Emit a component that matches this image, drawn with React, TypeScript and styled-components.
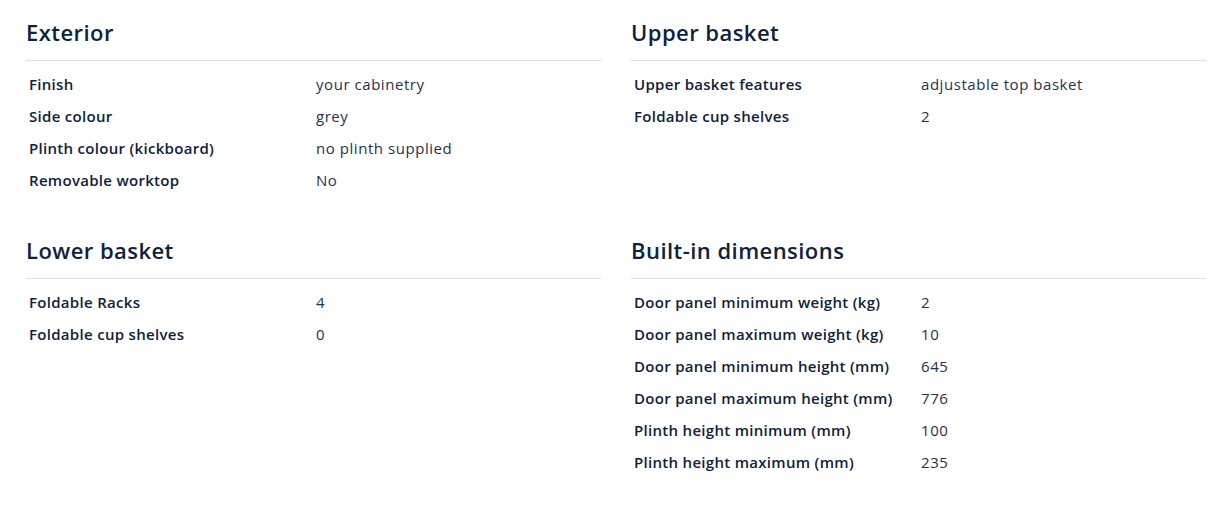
import { Fragment } from 'react';
import styled, { createGlobalStyle } from 'styled-components';

const GlobalStyle = createGlobalStyle`
  html, body {
    margin: 0;
    padding: 0;
    background: #ffffff;
  }
  body {
    font-family: "Open Sans", Lato, sans-serif;
    color: #0d2240;
  }
`;

const Page = styled.div`
  display: grid;
  grid-template-columns: 1fr 1fr;
  column-gap: 30px;
  row-gap: 22px;
  padding: 0 18px 0 26px;
  width: 1224px;
  box-sizing: border-box;
`;

const Section = styled.section`
  padding-top: 12px;
`;

const Heading = styled.h2`
  margin: 0;
  padding-bottom: 8px;
  border-bottom: 1px solid #dcdfe3;
  font-size: 22px;
  line-height: 40px;
  font-weight: 600;
  letter-spacing: 0.45px;
  color: #0d2240;
`;

const SpecList = styled.dl`
  margin: 7px 0 0;
  display: grid;
  grid-template-columns: 290px 1fr;
`;

const Label = styled.dt`
  padding-left: 3px;
  font-size: 15px;
  line-height: 32px;
  font-weight: 600;
  letter-spacing: 0.3px;
  color: #0d2240;
`;

const Value = styled.dd`
  margin: 0;
  font-size: 15px;
  line-height: 32px;
  font-weight: 400;
  letter-spacing: 0.55px;
  color: #1f3250;
`;

type Spec = [string, string];

const sections: { title: string; specs: Spec[] }[] = [
  {
    title: 'Exterior',
    specs: [
      ['Finish', 'your cabinetry'],
      ['Side colour', 'grey'],
      ['Plinth colour (kickboard)', 'no plinth supplied'],
      ['Removable worktop', 'No'],
    ],
  },
  {
    title: 'Upper basket',
    specs: [
      ['Upper basket features', 'adjustable top basket'],
      ['Foldable cup shelves', '2'],
    ],
  },
  {
    title: 'Lower basket',
    specs: [
      ['Foldable Racks', '4'],
      ['Foldable cup shelves', '0'],
    ],
  },
  {
    title: 'Built-in dimensions',
    specs: [
      ['Door panel minimum weight (kg)', '2'],
      ['Door panel maximum weight (kg)', '10'],
      ['Door panel minimum height (mm)', '645'],
      ['Door panel maximum height (mm)', '776'],
      ['Plinth height minimum (mm)', '100'],
      ['Plinth height maximum (mm)', '235'],
    ],
  },
];

export default function App() {
  return (
    <>
      <GlobalStyle />
      <Page>
        {sections.map((section) => (
          <Section key={section.title}>
            <Heading>{section.title}</Heading>
            <SpecList>
              {section.specs.map(([label, value]) => (
                <Fragment key={label}>
                  <Label>{label}</Label>
                  <Value>{value}</Value>
                </Fragment>
              ))}
            </SpecList>
          </Section>
        ))}
      </Page>
    </>
  );
}
